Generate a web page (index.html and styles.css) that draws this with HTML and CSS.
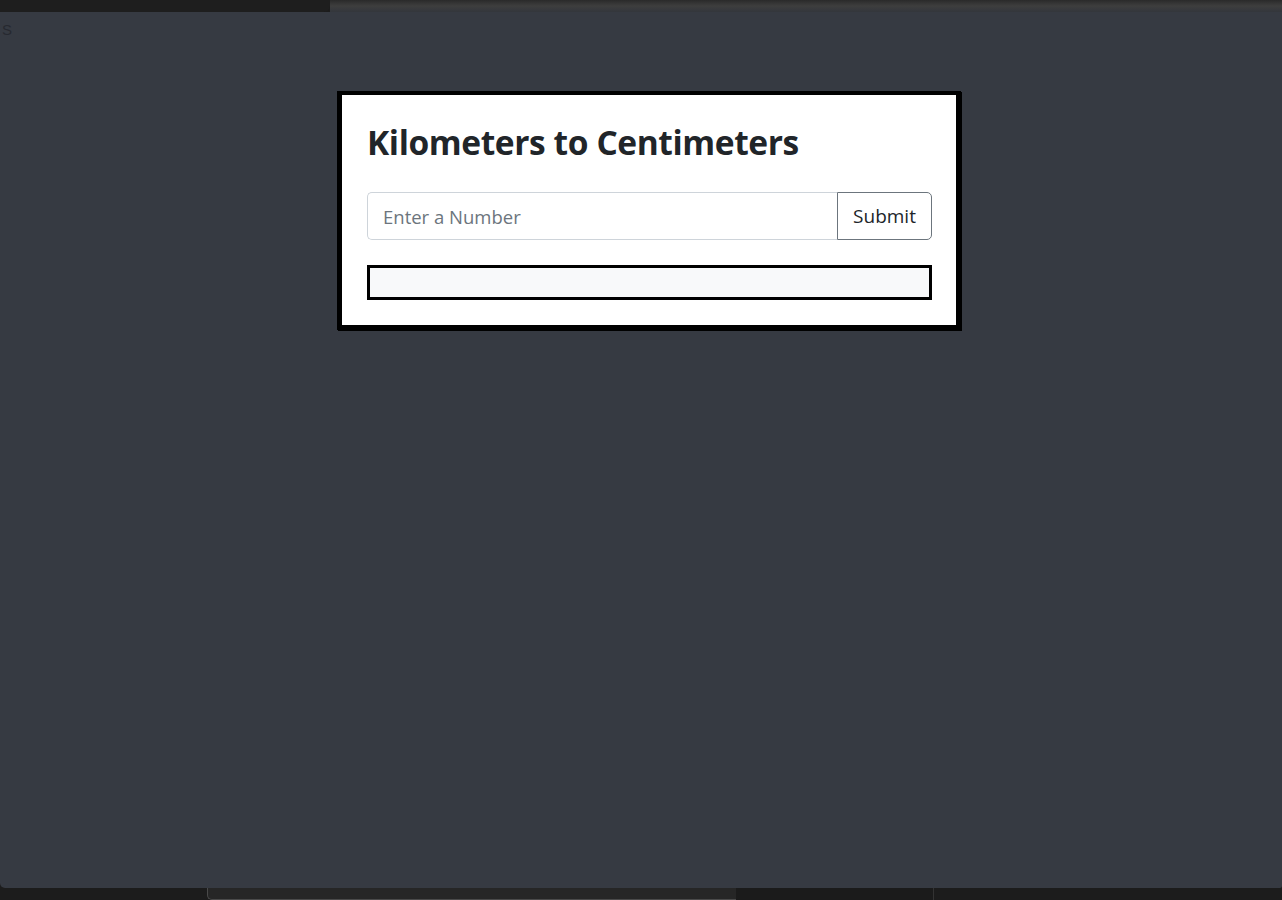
FILE: index.html
```html
<!DOCTYPE html>
<html lang="en">
<head>
<meta charset="utf-8">
<title>Kilometers to Centimeters</title>
<link rel="stylesheet" href="styles.css">
</head>
<body>
<div class="topbar"><div class="topbar-dark"></div><div class="topbar-light"></div></div>
<main class="viewport">
  <span class="corner-text">S</span>
  <section class="card">
    <h1 class="title">Kilometers to Centimeters</h1>
    <form class="input-group" onsubmit="return false;">
      <input class="field" type="text" placeholder="Enter a Number">
      <button class="btn" type="submit">Submit</button>
    </form>
    <div class="result"></div>
  </section>
</main>
<div class="bottombar">
  <div class="bb-left"></div>
  <div class="bb-tab"></div>
  <div class="bb-mid"></div>
  <div class="bb-right"></div>
</div>
</body>
</html>
```
FILE: styles.css
```css
html, body {
  margin: 0;
  padding: 0;
}
body {
  width: 1282px;
  height: 900px;
  overflow: hidden;
  background: #1c1c1c;
  display: flex;
  flex-direction: column;
  font-family: "Open Sans", "Noto Sans", sans-serif;
}
.topbar {
  height: 12px;
  display: flex;
  flex: none;
}
.topbar-dark {
  width: 330px;
  background: #1e1e1e;
  border-bottom-right-radius: 6px;
}
.topbar-light {
  flex: 1;
  background: linear-gradient(180deg, #2a2a2a 0%, #3e3e3e 50%, #33363c 100%);
}
.viewport {
  height: 876px;
  flex: none;
  background: #363a42;
  border-bottom-left-radius: 5px;
  border-bottom-right-radius: 2px;
  display: flex;
  flex-direction: column;
  align-items: flex-start;
}
.corner-text {
  font-family: "Liberation Sans", sans-serif;
  font-size: 15px;
  line-height: 18px;
  color: #262930;
  margin: 9px 0 0 2px;
}
.card {
  margin: 52px 0 0 337px;
  width: 624px;
  height: 239px;
  box-sizing: border-box;
  background: #fff;
  border: 5px solid #000;
  border-top-width: 4px;
  box-shadow: 1px 1px 0 #000;
  padding: 24px 24px 25px 25px;
  display: flex;
  flex-direction: column;
}
.title {
  margin: 0;
  font-family: "Open Sans", sans-serif;
  font-weight: 700;
  font-size: 33.5px;
  letter-spacing: -0.4px;
  line-height: 46px;
  color: #212529;
}
.input-group {
  margin: 27px 0 0 0;
  display: flex;
  height: 48px;
}
.field {
  flex: 1;
  min-width: 0;
  box-sizing: border-box;
  height: 48px;
  border: 1px solid #ced4da;
  border-right: none;
  border-radius: 5px 0 0 5px;
  padding: 0 15px;
  font-family: "Open Sans", sans-serif;
  font-size: 18.5px;
  color: #212529;
  background: #fff;
  outline: none;
}
.field::placeholder {
  color: #6c757d;
}
.btn {
  width: 95px;
  height: 48px;
  box-sizing: border-box;
  border: 1px solid #6c757d;
  border-radius: 0 5px 5px 0;
  background: #fff;
  color: #212529;
  font-family: "Open Sans", sans-serif;
  font-size: 19px;
  padding: 0;
}
.result {
  margin-top: 25px;
  height: 36px;
  box-sizing: border-box;
  border: 3px solid #000;
  background: #f8f9fa;
}
.bottombar {
  flex: 1;
  display: flex;
}
.bb-left {
  width: 207px;
  background: #1c1c1c;
}
.bb-tab {
  width: 528px;
  background: #262626;
  border-left: 1px solid #4a4a4a;
  border-bottom: 1px solid #4a4a4a;
  border-bottom-left-radius: 5px;
}
.bb-mid {
  width: 197px;
  background: #1b1b1b;
  border-right: 1px solid #333;
}
.bb-right {
  flex: 1;
  background: #1c1c1c;
}
```
